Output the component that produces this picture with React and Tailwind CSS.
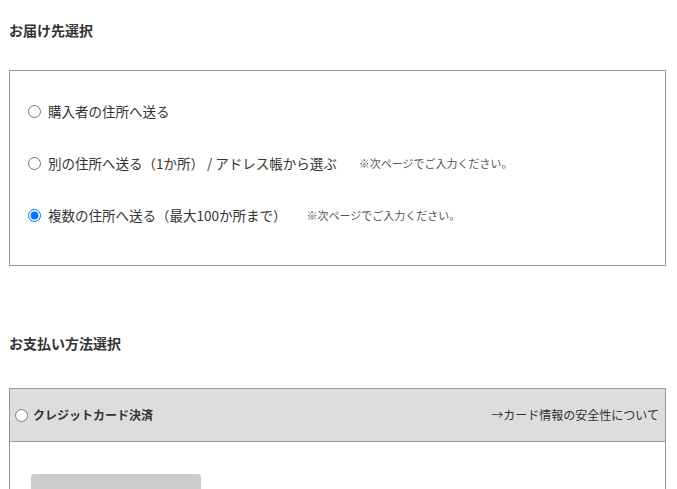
const font = { fontFamily: '"Noto Sans CJK JP", "Noto Sans", sans-serif' };

function Option({ label, note, noteGap, checked }) {
    return (
        <label className="flex items-center h-[20px] pl-[18px]">
            <input type="radio" name="dest" defaultChecked={checked} className="m-0 w-[13px] h-[13px]" />
            <span className="ml-[7px] text-[13.5px] leading-[20px] text-[#333]">{label}</span>
            {note && (
                <span className={`${noteGap} text-[11px] leading-[20px] text-[#555]`}>{note}</span>
            )}
        </label>
    );
}

export default function App() {
    return (
        <div className="bg-white h-[489px] overflow-hidden px-[9px] pt-[20px]" style={font}>
            <h2 className="text-[14px] leading-[20px] font-bold text-[#333]">お届け先選択</h2>

            <div className="mt-[30px] w-[657px] border border-[#999] flex flex-col gap-[32px] pt-[30px] pb-[40px]">
                <Option label="購入者の住所へ送る" />
                <Option
                    label="別の住所へ送る（1か所） / アドレス帳から選ぶ"
                    note="※次ページでご入力ください。"
                    noteGap="ml-[22px]"
                />
                <Option
                    label="複数の住所へ送る（最大100か所まで）"
                    note="※次ページでご入力ください。"
                    noteGap="ml-[20px]"
                    checked
                />
            </div>

            <h2 className="mt-[67px] text-[14px] leading-[20px] font-bold text-[#333]">お支払い方法選択</h2>

            <div className="mt-[35px] w-[657px] border-x border-t border-[#999]">
                <div className="h-[53px] bg-[#ddd] border-b border-[#999] flex items-center justify-between pl-[5px] pr-[6px]">
                    <label className="flex items-center">
                        <input type="radio" name="pay" className="m-0 w-[13px] h-[13px]" />
                        <span className="ml-[5px] text-[12px] font-bold text-[#333]">クレジットカード決済</span>
                    </label>
                    <a className="text-[12px] text-[#333]">→カード情報の安全性について</a>
                </div>
                <div className="pt-[32px] pl-[21px] h-[60px]">
                    <div className="w-[170px] h-[40px] rounded-[3px] bg-[#ccc]" />
                </div>
            </div>
        </div>
    );
}
